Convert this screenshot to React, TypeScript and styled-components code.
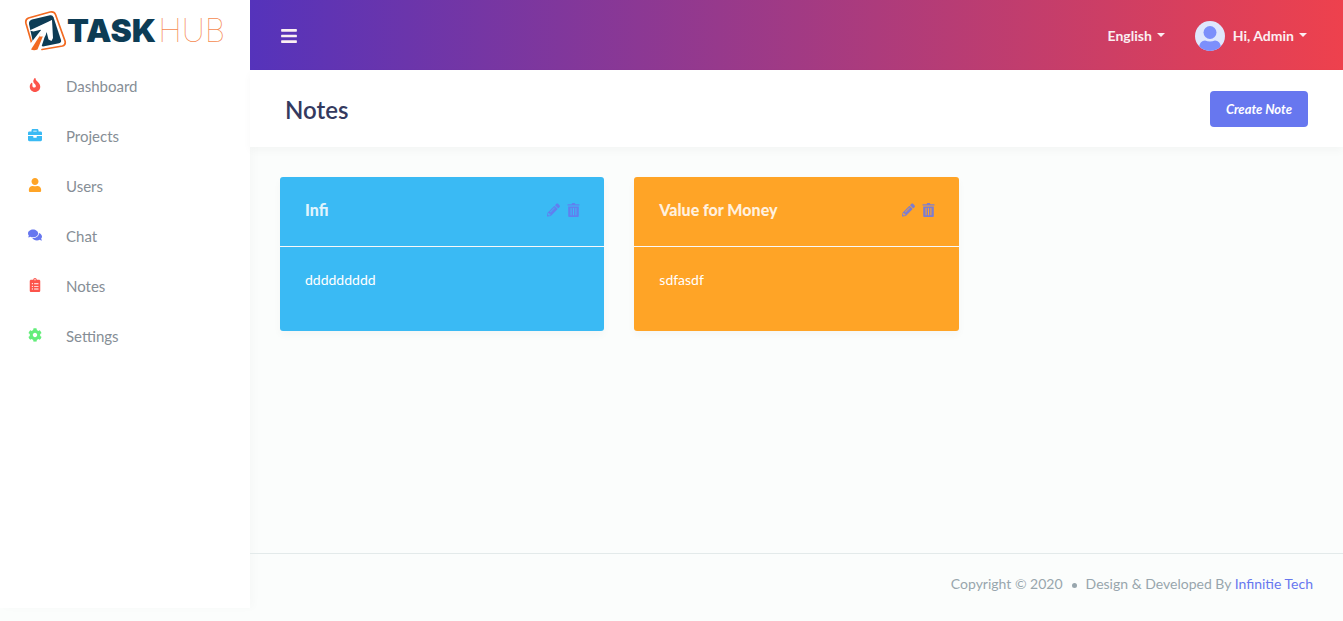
import React from "react";
import styled, { createGlobalStyle } from "styled-components";
import { FaFire, FaBriefcase, FaUser, FaComments, FaClipboardList, FaCog, FaBars, FaPencilAlt } from "react-icons/fa";

const Global = createGlobalStyle`
  * { box-sizing: border-box; }
  body {
    margin: 0;
    background: #fbfdfc;
    color: #6c757d;
    font: 400 14px/24px Lato, "Open Sans", sans-serif;
  }
  a { color: #6777ef; text-decoration: none; }
  button { font-family: inherit; cursor: pointer; }
`;

const Page = styled.div`
  display: flex;
  min-height: 100vh;
`;

const Sidebar = styled.aside`
  flex: 0 0 250px;
  margin-bottom: 13px;
  background: #fff;
  box-shadow: 4px 0 8px rgba(0, 0, 0, 0.02);
`;

const Brand = styled.a`
  display: flex;
  align-items: center;
  height: 61px;
  padding-left: 24px;
`;

const BrandMark = styled.svg`
  width: 43px;
  height: 42px;
`;

const BrandWord = styled.span<{ $thin?: boolean }>`
  margin-left: ${(p) => (p.$thin ? 2 : 0)}px;
  font-family: Inter, sans-serif;
  font-size: 32px;
  line-height: 40px;
  font-weight: ${(p) => (p.$thin ? 100 : 900)};
  color: ${(p) => (p.$thin ? "#f58a50" : "#0d3c55")};
`;

const Menu = styled.ul`
  margin: 0;
  padding: 0;
  list-style: none;
`;

const MenuLink = styled.a<{ $tint: string }>`
  display: flex;
  align-items: center;
  gap: 24px;
  height: 50px;
  padding-left: 28px;
  color: #868e96;
  font-size: 15px;
  svg { width: 14px; height: 14px; margin-bottom: 2px; color: ${(p) => p.$tint}; }
`;

const Main = styled.div`
  flex: 1;
  min-width: 0;
  display: flex;
  flex-direction: column;
`;

const TopBar = styled.header`
  display: flex;
  align-items: center;
  justify-content: space-between;
  height: 70px;
  padding: 1px 36px 0 30px;
  background: linear-gradient(to right, #5533bb, #ee414d);
`;

const TopActions = styled.div`
  display: flex;
  align-items: center;
  gap: 30px;
`;

const BarButton = styled.button`
  display: flex;
  align-items: center;
  gap: 8px;
  padding: 0;
  border: 0;
  background: none;
  color: #fbeff2;
  font-size: 14px;
  font-weight: 700;
  line-height: 24px;
`;

const Label = styled.span`
  display: flex;
  align-items: center;
  gap: 5px;
  &::after {
    content: "";
    margin-bottom: 2px;
    border: 4px solid transparent;
    border-top-color: currentColor;
    border-bottom: 0;
  }
`;

const Avatar = styled.svg`
  width: 30px;
  height: 30px;
`;

const Heading = styled.section`
  display: flex;
  align-items: center;
  justify-content: space-between;
  height: 77px;
  padding: 0 35px;
  background: #fff;
  box-shadow: 0 4px 8px rgba(0, 0, 0, 0.03);
`;

const Title = styled.h1`
  margin: 2px 0 0;
  font-size: 24px;
  line-height: 32px;
  font-weight: 600;
  color: #34395e;
`;

const CreateButton = styled.button`
  height: 36px;
  padding: 0 16px;
  border: 0;
  border-radius: 4px;
  background: #6777ef;
  color: #fff;
  font-size: 13px;
  font-style: italic;
  font-weight: 700;
`;

const Cards = styled.div`
  flex: 1;
  display: grid;
  grid-template-columns: repeat(3, 1fr);
  align-items: start;
  gap: 30px;
  padding: 30px;
`;

const Card = styled.article<{ $tint: string }>`
  border-radius: 3px;
  background: ${(p) => p.$tint};
  color: #fff;
  box-shadow: 0 4px 8px rgba(0, 0, 0, 0.03);
`;

const CardHead = styled.header`
  display: flex;
  align-items: center;
  justify-content: space-between;
  height: 70px;
  padding: 0 24px 3px 25px;
  border-bottom: 1px solid #f9f9f9;
`;

const CardTitle = styled.h2`
  margin: 0;
  font-size: 16px;
  line-height: 28px;
  font-weight: 900;
  opacity: 0.85;
`;

const CardTools = styled.div`
  display: flex;
  gap: 7px;
`;

const ToolButton = styled.button`
  display: flex;
  padding: 0;
  border: 0;
  background: none;
  color: #6777ef;
  opacity: 0.85;
  svg { width: 13px; height: 14px; }
`;

const CardText = styled.p`
  margin: 0;
  padding: 21px 25px 39px;
`;

const Footer = styled.footer`
  display: flex;
  justify-content: flex-end;
  align-items: center;
  height: 68px;
  padding: 0 30px 7px;
  border-top: 1px solid #e3eaea;
  color: #98a6ad;
`;

const Dot = styled.span`
  width: 5px;
  height: 5px;
  margin: 2px 9px 0;
  border-radius: 50%;
  background: currentColor;
`;

const Trash = () => (
  <svg viewBox="0 0 13 14" fill="currentColor" aria-hidden="true">
    <path d="M1 1.2h3.600L5.200 0h2.600l.6 1.200H12a.5.5 0 0 1 .5.5v.9H.5v-.9a.5.5 0 0 1 .5-.5z" />
    <path fillRule="evenodd" d="M1.200 3.400h10.600V13a1 1 0 0 1-1 1H2.200a1 1 0 0 1-1-1zM3.600 5v7.200h1V5zM6 5v7.200h1V5zM8.400 5v7.200h1V5z" />
  </svg>
);

const menu = [
  { name: "Dashboard", tint: "#fc544b", Icon: FaFire },
  { name: "Projects", tint: "#3abaf4", Icon: FaBriefcase },
  { name: "Users", tint: "#ffa426", Icon: FaUser },
  { name: "Chat", tint: "#6777ef", Icon: FaComments },
  { name: "Notes", tint: "#fc544b", Icon: FaClipboardList },
  { name: "Settings", tint: "#63ed7a", Icon: FaCog },
];

const notes = [
  { title: "Infi", text: "ddddddddd", tint: "#3abaf4" },
  { title: "Value for Money", text: "sdfasdf", tint: "#ffa426" },
];

export default function App() {
  return (
    <>
      <Global />
      <Page>
        <Sidebar>
          <Brand href="#">
            <BrandMark viewBox="0 0 43 42" aria-hidden="true">
              <path d="M8 34 2 13.500Q1 9.500 4.500 8L26 2Q30 1 31.500 4.500L41 31Q42 34.800 38.500 36L18 39.500" fill="none" stroke="#f26a21" strokeWidth="1.700" strokeLinecap="round" />
              <path d="M8 9.500 26 5.300Q28.600 4.800 29.500 7.200L37 30Q37.700 32.500 35 33.200L19 36.500 9 32.500 5 14Q4.600 10.500 8 9.500Z" fill="#0d3c55" />
              <path d="M28 10 5.500 20.500 9.500 21.500 17.500 19.500 6 34 5 41 16 41 22.500 21.500 24.500 29.500 27.500 31 29 28Z" fill="#fff" />
              <path d="M20 19 7 39.500Q10 40.800 13.500 39.500L21.500 20Z" fill="#f26a21" />
              <path d="M28 10 15.500 18.500 17.500 20.500 15.500 26.500 21 26.500 23.500 20Z" fill="#fff" />
            </BrandMark>
            <BrandWord>TASK</BrandWord>
            <BrandWord $thin>HUB</BrandWord>
          </Brand>
          <nav>
            <Menu>
              {menu.map(({ name, tint, Icon }) => (
                <li key={name}>
                  <MenuLink href="#" $tint={tint}>
                    <Icon />
                    {name}
                  </MenuLink>
                </li>
              ))}
            </Menu>
          </nav>
        </Sidebar>
        <Main>
          <TopBar>
            <BarButton aria-label="Toggle menu">
              <FaBars size={18} />
            </BarButton>
            <TopActions>
              <BarButton>
                <Label>English</Label>
              </BarButton>
              <BarButton>
                <Avatar viewBox="0 0 30 30" aria-hidden="true">
                  <clipPath id="disc"><circle cx="15" cy="15" r="15" /></clipPath>
                  <g clipPath="url(#disc)">
                    <rect width="30" height="30" fill="#dfe7fd" />
                    <circle cx="15" cy="11.500" r="6.500" fill="#7c8ffb" />
                    <path d="M4 30V26Q5 19.500 10 19.500Q15 21.500 20 19.500Q25 19.500 26 26V30Z" fill="#7c8ffb" />
                  </g>
                </Avatar>
                <Label>Hi, Admin</Label>
              </BarButton>
            </TopActions>
          </TopBar>
          <Heading>
            <Title>Notes</Title>
            <CreateButton>Create Note</CreateButton>
          </Heading>
          <Cards>
            {notes.map((n) => (
              <Card key={n.title} $tint={n.tint}>
                <CardHead>
                  <CardTitle>{n.title}</CardTitle>
                  <CardTools>
                    <ToolButton aria-label="Edit note"><FaPencilAlt /></ToolButton>
                    <ToolButton aria-label="Delete note"><Trash /></ToolButton>
                  </CardTools>
                </CardHead>
                <CardText>{n.text}</CardText>
              </Card>
            ))}
          </Cards>
          <Footer>
            Copyright © 2020
            <Dot />
            <span>Design &amp; Developed By <a href="#">Infinitie Tech</a></span>
          </Footer>
        </Main>
      </Page>
    </>
  );
}
